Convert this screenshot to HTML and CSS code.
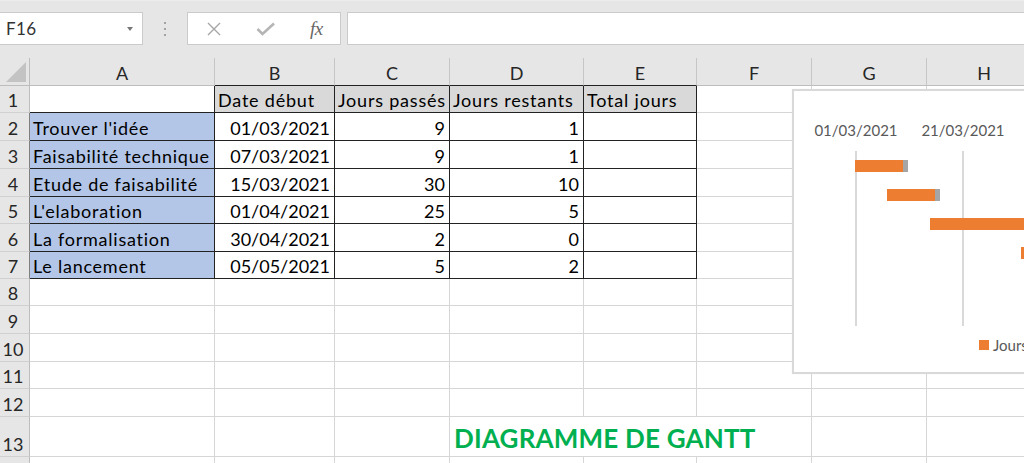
FILE: index.html
```html
<!DOCTYPE html>
<html lang="fr">
<head>
<meta charset="utf-8">
<title>Diagramme de Gantt</title>
<link rel="stylesheet" href="styles.css">
</head>
<body>
<div class="app">
  <div class="toolbar">
    <div class="namebox"><span class="nb-text">F16</span><span class="nb-arrow"></span></div>
    <div class="grip"><i></i><i></i><i></i></div>
    <div class="fxbox">
      <svg class="ico-x" width="14" height="14" viewBox="0 0 14 14"><path d="M1 1 L13 13 M13 1 L1 13" stroke="#a6a6a6" stroke-width="1.4" fill="none"/></svg>
      <svg class="ico-ok" width="20" height="14" viewBox="0 0 20 14"><path d="M1.5 7 L6.5 12 L18 1.5" stroke="#b5b5b5" stroke-width="2.6" fill="none"/></svg>
      <span class="fx">fx</span>
    </div>
    <div class="formula"></div>
  </div>

  <div class="sheet">
    <!-- header row -->
    <div class="corner"><svg width="22" height="22" viewBox="0 0 22 22"><path d="M21 1 L21 21 L1 21 Z" fill="#c3c3c3"/></svg></div>
    <div class="ch">A</div><div class="ch tb">B</div><div class="ch tb">C</div><div class="ch tb">D</div><div class="ch tb">E</div><div class="ch">F</div><div class="ch">G</div><div class="ch">H</div>

    <!-- row 1 -->
    <div class="rh">1</div>
    <div class="c a1"></div>
    <div class="c t hd">Date début</div><div class="c t hd">Jours passés</div><div class="c t hd">Jours restants</div><div class="c t hd">Total jours</div>
    <div class="c"></div><div class="c"></div><div class="c"></div>

    <!-- row 2 -->
    <div class="rh tr">2</div>
    <div class="c t blue">Trouver l'idée</div><div class="c t num">01/03/2021</div><div class="c t num">9</div><div class="c t num">1</div><div class="c t"></div>
    <div class="c"></div><div class="c"></div><div class="c"></div>

    <!-- row 3 -->
    <div class="rh tr">3</div>
    <div class="c t blue">Faisabilité technique</div><div class="c t num">07/03/2021</div><div class="c t num">9</div><div class="c t num">1</div><div class="c t"></div>
    <div class="c"></div><div class="c"></div><div class="c"></div>

    <!-- row 4 -->
    <div class="rh tr">4</div>
    <div class="c t blue">Etude de faisabilité</div><div class="c t num">15/03/2021</div><div class="c t num">30</div><div class="c t num">10</div><div class="c t"></div>
    <div class="c"></div><div class="c"></div><div class="c"></div>

    <!-- row 5 -->
    <div class="rh tr">5</div>
    <div class="c t blue">L'elaboration</div><div class="c t num">01/04/2021</div><div class="c t num">25</div><div class="c t num">5</div><div class="c t"></div>
    <div class="c"></div><div class="c"></div><div class="c"></div>

    <!-- row 6 -->
    <div class="rh tr">6</div>
    <div class="c t blue">La formalisation</div><div class="c t num">30/04/2021</div><div class="c t num">2</div><div class="c t num">0</div><div class="c t"></div>
    <div class="c"></div><div class="c"></div><div class="c"></div>

    <!-- row 7 -->
    <div class="rh tr">7</div>
    <div class="c t blue">Le lancement</div><div class="c t num">05/05/2021</div><div class="c t num">5</div><div class="c t num">2</div><div class="c t"></div>
    <div class="c"></div><div class="c"></div><div class="c"></div>

    <!-- rows 8-12 -->
    <div class="rh">8</div>
    <div class="c"></div><div class="c"></div><div class="c"></div><div class="c"></div><div class="c"></div><div class="c"></div><div class="c"></div><div class="c"></div>
    <div class="rh">9</div>
    <div class="c"></div><div class="c"></div><div class="c"></div><div class="c"></div><div class="c"></div><div class="c"></div><div class="c"></div><div class="c"></div>
    <div class="rh">10</div>
    <div class="c"></div><div class="c"></div><div class="c"></div><div class="c"></div><div class="c"></div><div class="c"></div><div class="c"></div><div class="c"></div>
    <div class="rh">11</div>
    <div class="c"></div><div class="c"></div><div class="c"></div><div class="c"></div><div class="c"></div><div class="c"></div><div class="c"></div><div class="c"></div>
    <div class="rh">12</div>
    <div class="c"></div><div class="c"></div><div class="c"></div><div class="c"></div><div class="c"></div><div class="c"></div><div class="c"></div><div class="c"></div>

    <!-- row 13 -->
    <div class="rh">13</div>
    <div class="c"></div><div class="c"></div><div class="c"></div>
    <div class="c title">DIAGRAMME DE GANTT</div>
    <div class="c"></div><div class="c"></div>

    <!-- row 14 (only its top edge is in view) -->
    <div class="rh"></div>
    <div class="c"></div><div class="c"></div><div class="c"></div><div class="c"></div><div class="c"></div><div class="c"></div><div class="c"></div><div class="c"></div>
  </div>

  <div class="chart">
    <div class="axis">
      <span class="tick" style="left:62px">01/03/2021</span>
      <span class="tick" style="left:169px">21/03/2021</span>
      <span class="tick" style="left:276px">10/04/2021</span>
    </div>
    <div class="plot">
      <div class="gridline" style="left:61px"></div>
      <div class="gridline" style="left:168px"></div>
      <div class="gridline" style="left:275px"></div>
      <div class="bars">
        <div class="bar-row" style="padding-left:61px"><span class="seg passed" style="width:48px"></span><span class="seg rest" style="width:5px"></span></div>
        <div class="bar-row" style="padding-left:93px"><span class="seg passed" style="width:48px"></span><span class="seg rest" style="width:5px"></span></div>
        <div class="bar-row" style="padding-left:136px"><span class="seg passed" style="width:160px"></span><span class="seg rest" style="width:54px"></span></div>
        <div class="bar-row" style="padding-left:227px"><span class="seg passed" style="width:134px"></span><span class="seg rest" style="width:27px"></span></div>
        <div class="bar-row" style="padding-left:382px"><span class="seg passed" style="width:11px"></span></div>
        <div class="bar-row" style="padding-left:409px"><span class="seg passed" style="width:27px"></span><span class="seg rest" style="width:11px"></span></div>
      </div>
    </div>
    <div class="legend">
      <span class="key passed"></span><span class="lg-text">Jours passés</span>
      <span class="key rest"></span><span class="lg-text">Jours restants</span>
    </div>
  </div>
</div>
</body>
</html>
```

FILE: styles.css
```css
html, body {
  margin: 0;
  padding: 0;
}
body {
  width: 1024px;
  height: 463px;
  overflow: hidden;
  background: #ffffff;
  font-family: Lato, "Open Sans", "Noto Sans", sans-serif;
  color: #000;
}
.app {
  position: relative;
  width: 1024px;
  height: 463px;
  overflow: hidden;
}

/* ---------- toolbar ---------- */
.toolbar {
  height: 58px;
  box-sizing: border-box;
  background: #e6e6e6;
  border-top: 1px solid #ececec;
  padding-top: 11px;
  display: flex;
  align-items: flex-start;
}
.namebox {
  width: 143px;
  height: 33px;
  box-sizing: border-box;
  background: #fff;
  border: 1px solid #cbcbcb;
  border-left: none;
  display: flex;
  align-items: center;
  justify-content: space-between;
  padding: 0 9px 0 6px;
}
.nb-text {
  font-size: 17px;
  color: #333;
  letter-spacing: 0.4px;
}
.nb-arrow {
  width: 0;
  height: 0;
  border-left: 3.5px solid transparent;
  border-right: 3.5px solid transparent;
  border-top: 4px solid #777;
}
.grip {
  width: 44px;
  height: 33px;
  display: flex;
  flex-direction: column;
  align-items: center;
  justify-content: center;
  gap: 4px;
}
.grip i {
  display: block;
  width: 2px;
  height: 2px;
  background: #a3a3a3;
}
.fxbox {
  width: 154px;
  height: 33px;
  box-sizing: border-box;
  background: #fff;
  border: 1px solid #cbcbcb;
  display: flex;
  align-items: center;
  padding-left: 19px;
}
.ico-x {
  margin-right: 35px;
}
.ico-ok {
  margin-right: 34px;
}
.fx {
  font-family: "Liberation Serif", "DejaVu Serif", serif;
  font-style: italic;
  font-size: 19px;
  color: #666;
  letter-spacing: -0.5px;
}
.formula {
  flex: 1;
  height: 33px;
  margin-left: 6px;
  box-sizing: border-box;
  background: #fff;
  border: 1px solid #cbcbcb;
  border-right: none;
}

/* ---------- sheet grid ---------- */
.sheet {
  display: grid;
  grid-template-columns: 30px 185px 120px 115px 134px 113px 115px 115px 115px;
  grid-template-rows: 28px 27px 28px 28px 28px 27px 28px 27px 27px 28px 28px 27px 28px 40px 28px;
  width: 1042px;
}
.sheet > div {
  box-sizing: border-box;
  border-right: 1px solid #d6d6d6;
  border-bottom: 1px solid #d6d6d6;
  display: flex;
  align-items: flex-end;
  white-space: nowrap;
  overflow: hidden;
  font-size: 18px;
  line-height: 22px;
}
.sheet > .corner {
  background: #e6e6e6;
  border-right: 1px solid #bdbdbd;
  border-bottom: 1px solid #bdbdbd;
  align-items: flex-end;
  justify-content: flex-end;
  padding: 0 2px 2px 0;
}
.sheet > .corner svg {
  display: block;
}
.sheet > .ch {
  background: #e6e6e6;
  color: #262626;
  justify-content: center;
  align-items: center;
  padding-top: 3px;
  border-right: 1px solid #c6c6c6;
  border-bottom: 1px solid #bdbdbd;
}
.sheet > .ch.tb {
  border-bottom-color: #222;
}
.sheet > .rh {
  background: #e6e6e6;
  color: #262626;
  justify-content: center;
  padding: 0 3px 1px 0;
  border-right: 1px solid #bdbdbd;
  border-bottom: 1px solid #d0d0d0;
}
.sheet > .rh.tr {
  border-right-color: #7f7f7f;
}
.sheet > .c {
  padding: 0 3px 1px 3px;
}
.sheet > .a1 {
  border-right-color: #222;
  border-bottom-color: #222;
}
.sheet > .t {
  border-right-color: #222;
  border-bottom-color: #222;
}
.sheet > .hd {
  background: #d9d9d9;
  padding-left: 3px;
  padding-right: 0;
  letter-spacing: 0.8px;
}
.sheet > .blue {
  background: #b4c6e7;
  letter-spacing: 0.75px;
}
.sheet > .num {
  justify-content: flex-end;
  padding-right: 4px;
}
.sheet > .title {
  grid-column: span 3;
  font-weight: 700;
  font-size: 26px;
  line-height: 30px;
  color: #00b050;
  padding: 0 0 3px 4px;
  letter-spacing: 0.2px;
}

/* ---------- chart ---------- */
.chart {
  position: absolute;
  left: 792px;
  top: 89px;
  width: 320px;
  height: 285px;
  box-sizing: border-box;
  background: #fff;
  border: 2px solid #d9d9d9;
  box-shadow: 0 0 1px rgba(0, 0, 0, 0.08);
}
.axis {
  position: absolute;
  left: 0;
  top: 29px;
  right: 0;
  height: 20px;
}
.tick {
  position: absolute;
  top: 0;
  transform: translateX(-50%);
  font-size: 15px;
  line-height: 20px;
  color: #595959;
  white-space: nowrap;
}
.plot {
  position: absolute;
  left: 0;
  right: 0;
  top: 60px;
  height: 175px;
}
.gridline {
  position: absolute;
  top: 0;
  bottom: 0;
  width: 2px;
  background: #d9d9d9;
}
.bars {
  position: relative;
  height: 100%;
  display: flex;
  flex-direction: column;
}
.bar-row {
  flex: 1;
  display: flex;
  align-items: center;
}
.seg {
  display: block;
  height: 12px;
  flex: none;
}
.passed {
  background: #ed7d31;
}
.rest {
  background: #a5a5a5;
}
.legend {
  position: absolute;
  left: 185px;
  top: 244px;
  display: flex;
  align-items: center;
  white-space: nowrap;
}
.key {
  display: block;
  width: 10px;
  height: 10px;
  margin-right: 4px;
}
.lg-text {
  font-size: 15px;
  line-height: 20px;
  color: #595959;
  margin-right: 14px;
}
```
